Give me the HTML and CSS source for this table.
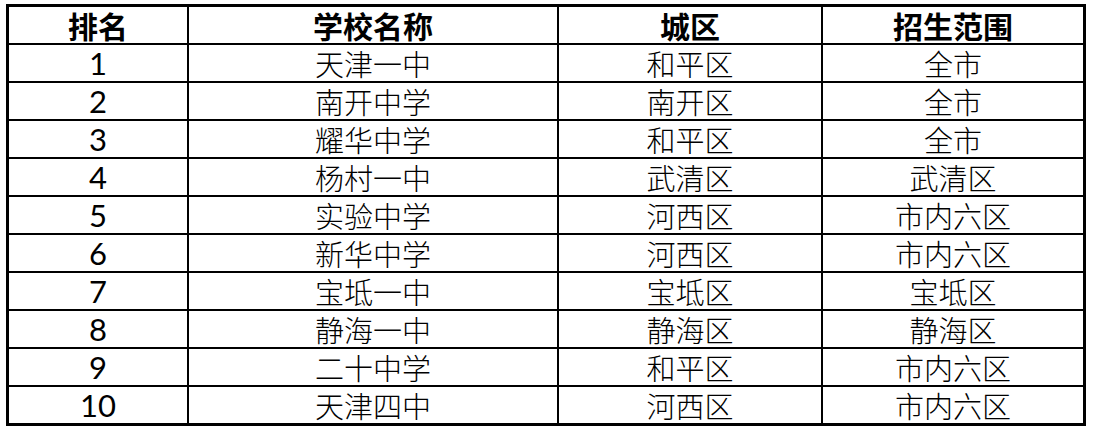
FILE: index.html
```html
<!DOCTYPE html>
<html lang="zh-CN">
<head>
<meta charset="utf-8">
<title>学校排名</title>
<link rel="stylesheet" href="styles.css">
</head>
<body>
<div class="sheet">
  <div class="grid">
    <div class="cell head">排名</div>
    <div class="cell head">学校名称</div>
    <div class="cell head">城区</div>
    <div class="cell head">招生范围</div>

    <div class="cell num">1</div><div class="cell">天津一中</div><div class="cell">和平区</div><div class="cell">全市</div>
    <div class="cell num">2</div><div class="cell">南开中学</div><div class="cell">南开区</div><div class="cell">全市</div>
    <div class="cell num">3</div><div class="cell">耀华中学</div><div class="cell">和平区</div><div class="cell">全市</div>
    <div class="cell num">4</div><div class="cell">杨村一中</div><div class="cell">武清区</div><div class="cell">武清区</div>
    <div class="cell num">5</div><div class="cell">实验中学</div><div class="cell">河西区</div><div class="cell">市内六区</div>
    <div class="cell num">6</div><div class="cell">新华中学</div><div class="cell">河西区</div><div class="cell">市内六区</div>
    <div class="cell num">7</div><div class="cell">宝坻一中</div><div class="cell">宝坻区</div><div class="cell">宝坻区</div>
    <div class="cell num">8</div><div class="cell">静海一中</div><div class="cell">静海区</div><div class="cell">静海区</div>
    <div class="cell num">9</div><div class="cell">二十中学</div><div class="cell">和平区</div><div class="cell">市内六区</div>
    <div class="cell num">10</div><div class="cell">天津四中</div><div class="cell">河西区</div><div class="cell">市内六区</div>
  </div>
</div>
</body>
</html>
```

FILE: styles.css
```css
html, body {
  margin: 0;
  padding: 0;
  background: #ffffff;
}

.sheet {
  width: 1094px;
  height: 436px;
  padding: 4px 0 0 6px;
  box-sizing: border-box;
}

.grid {
  display: grid;
  grid-template-columns: 178px 368px 262px 260px;
  grid-auto-rows: 36px;
  gap: 2px;
  padding: 3px;
  width: max-content;
  background: #000000;
}

.cell {
  display: flex;
  align-items: center;
  justify-content: center;
  background: #ffffff;
  color: #000000;
  font-family: "Noto Sans CJK SC", "Noto Sans", sans-serif;
  font-size: 29px;
  line-height: 1;
  font-weight: 300;
  white-space: nowrap;
}

.cell.head {
  font-size: 30px;
  font-weight: 700;
}

.cell.num {
  font-family: Lato, "Noto Sans", sans-serif;
  font-size: 31px;
  font-weight: 400;
}
```
